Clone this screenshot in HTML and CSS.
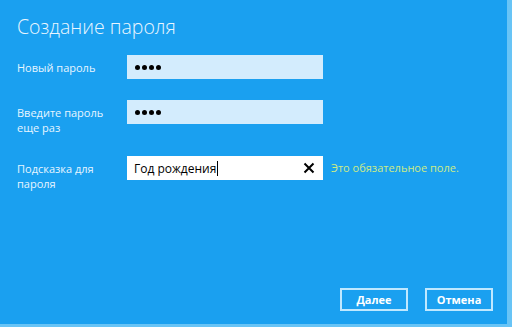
FILE: index.html
```html
<!DOCTYPE html>
<html lang="ru">
  <head>
    <meta charset="UTF-8" />
    <title>Создание пароля</title>
    <link rel="stylesheet" href="styles.css">
  </head>
  <body>
    <div class="dialog">
      <h1>Создание пароля</h1>

      <div class="form">
        <div class="row">
          <label>Новый пароль</label>
          <div class="field dim">
            <span class="dot"></span><span class="dot"></span><span class="dot"></span><span class="dot"></span>
          </div>
        </div>

        <div class="row">
          <label>Введите пароль<br />еще раз</label>
          <div class="field dim">
            <span class="dot"></span><span class="dot"></span><span class="dot"></span><span class="dot"></span>
          </div>
        </div>

        <div class="row">
          <label>Подсказка для<br />пароля</label>
          <div class="field">
            <span class="value">Год рождения</span><span class="caret"></span>
            <svg class="clear" width="12" height="12" viewBox="0 0 12 12">
              <path d="M1.5 1.5 L10.5 10.5 M10.5 1.5 L1.5 10.5" stroke="#000" stroke-width="2" />
            </svg>
          </div>
          <span class="hint">Это обязательное поле.</span>
        </div>
      </div>

      <div class="buttons">
        <button>Далее</button>
        <button>Отмена</button>
      </div>
    </div>
  </body>
</html>
```

FILE: styles.css
```css
html,
body {
  margin: 0;
  height: 100%;
  background-color: #68c4f6;
}

body {
  font-family: 'Open Sans', 'Liberation Sans', sans-serif;
  color: #e6f5ff;
}

.dialog {
  box-sizing: border-box;
  width: 507px;
  height: 324px;
  background-color: #1aa0f0;
  padding: 0 17px;
  display: flex;
  flex-direction: column;
}

h1 {
  font-weight: 300;
  font-size: 19.5px;
  line-height: 28px;
  margin: 13px 0 14px;
  color: #eaf6ff;
}

.row {
  display: flex;
  align-items: flex-start;
  margin-bottom: 21px;
}

.row label {
  width: 110px;
  font-size: 11px;
  line-height: 15px;
  padding-top: 5px;
}

.field {
  box-sizing: border-box;
  width: 196px;
  height: 24px;
  background-color: #fff;
  display: flex;
  align-items: center;
  padding: 0 8px 0 7px;
  color: #000;
  font-size: 12px;
}

.field.dim {
  background-color: #d3ecfd;
  gap: 2px;
  padding-left: 8px;
}

.dot {
  width: 5px;
  height: 5px;
  border-radius: 50%;
  background-color: #000;
}

.caret {
  width: 1px;
  height: 15px;
  background-color: #000;
  margin-left: 1px;
}

.clear {
  margin-left: auto;
}

.hint {
  font-size: 11px;
  line-height: 24px;
  margin-left: 8px;
  color: #cdeb86;
}

.buttons {
  margin-top: auto;
  margin-bottom: 13px;
  margin-right: -3px;
  display: flex;
  justify-content: flex-end;
  gap: 17px;
}

.buttons button {
  width: 68px;
  height: 23px;
  background-color: #1aa0f0;
  border: 2px solid #bfe8ff;
  color: #fff;
  font-family: 'Open Sans', 'Liberation Sans', sans-serif;
  font-weight: bold;
  font-size: 11px;
  padding: 0;
}
```
